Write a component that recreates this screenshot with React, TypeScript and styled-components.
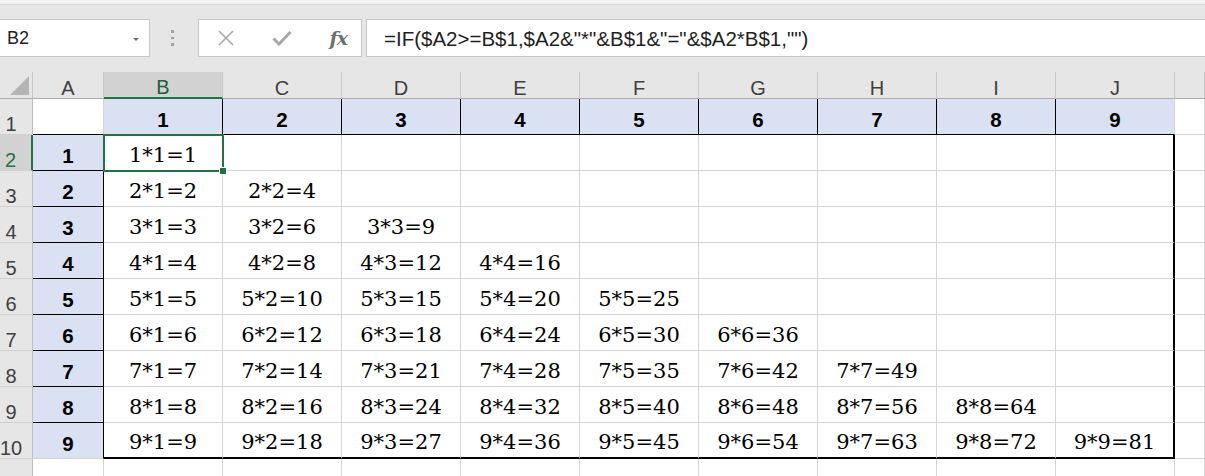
import React from "react";
import styled, { createGlobalStyle } from "styled-components";

type Line = "grid" | "black" | "thick";

const GREEN = "#217346";
const BLUE = "#d9e1f2";

const lineCss = (l: Line): string =>
  l === "thick" ? "2px solid #000" : l === "black" ? "1px solid #000" : "1px solid #d4d4d4";

const GlobalStyle = createGlobalStyle`
  html, body {
    margin: 0;
    padding: 0;
    background: #e6e6e6;
    overflow: hidden;
  }
  body {
    font-family: "Liberation Sans", Arial, sans-serif;
  }
`;

const Screen = styled.div`
  width: 1205px;
  height: 476px;
  overflow: hidden;
  display: flex;
  flex-direction: column;
  & > * {
    flex-shrink: 0;
  }
`;

const TopStrip = styled.div`
  height: 4px;
  background: #f3f3f3;
  border-bottom: 1px solid #d4d4d4;
`;

const FormulaBar = styled.div`
  display: flex;
  align-items: stretch;
  height: 38px;
  padding: 14px 0 15px;
  background: #e6e6e6;
`;

const Box = styled.div`
  box-sizing: border-box;
  background: #fff;
  border: 1px solid #c6c6c6;
  display: flex;
  align-items: center;
`;

const NameBox = styled(Box)`
  width: 151px;
  margin-left: -1px;
  padding: 0 10px 0 7px;
  justify-content: space-between;
  font-size: 18px;
  line-height: 20px;
  color: #222;
`;

const DropArrow = styled.span`
  width: 0;
  height: 0;
  border-left: 3px solid transparent;
  border-right: 3px solid transparent;
  border-top: 3px solid #6d6d6d;
  margin-top: 2px;
`;

const Grip = styled.div`
  width: 45px;
  display: flex;
  flex-direction: column;
  align-items: center;
  justify-content: center;
  gap: 4px;
  padding-right: 3px;
`;

const GripDot = styled.span`
  width: 3px;
  height: 2.5px;
  background: #a3a3a3;
`;

const FnBox = styled(Box)`
  width: 164px;
  padding: 0 14px 0 18px;
  justify-content: space-between;
`;

const FxLabel = styled.span`
  font-family: "DejaVu Serif", "Liberation Serif", serif;
  font-style: italic;
  font-weight: bold;
  font-size: 19px;
  color: #6f6f6f;
  letter-spacing: -1px;
`;

const FormulaBox = styled(Box)`
  flex: 1;
  margin-left: 4px;
  margin-right: -1px;
  padding: 2px 0 0 17px;
  font-size: 20.5px;
  line-height: 22px;
  color: #1f1f1f;
  white-space: nowrap;
`;

const Sheet = styled.div`
  display: grid;
  grid-template-columns: 33px 71px repeat(9, 119px) 1fr;
  grid-template-rows: 27px repeat(11, 36px);
  background: #fff;
`;

const Corner = styled.div`
  box-sizing: border-box;
  background: #e6e6e6;
  border-right: 1px solid #c6c6c6;
  border-bottom: 1px solid #ababab;
  display: flex;
  align-items: flex-end;
  justify-content: flex-end;
  padding: 0 3px 3px 0;
`;

const CornerTriangle = styled.span`
  width: 0;
  height: 0;
  border-left: 19px solid transparent;
  border-bottom: 19px solid #b5b5b5;
`;

const ColHeader = styled.div<{ $selected?: boolean }>`
  box-sizing: border-box;
  background: ${(p) => (p.$selected ? "#d2d2d2" : "#e6e6e6")};
  border-right: 1px solid #c6c6c6;
  border-bottom: ${(p) => (p.$selected ? `2px solid ${GREEN}` : "1px solid #ababab")};
  display: flex;
  align-items: flex-end;
  justify-content: center;
  font-size: 20px;
  line-height: 20px;
  color: ${(p) => (p.$selected ? "#1e5e3a" : "#404040")};
`;

const RowHeader = styled.div<{ $selected?: boolean }>`
  box-sizing: border-box;
  background: ${(p) => (p.$selected ? "#d2d2d2" : "#e6e6e6")};
  border-right: ${(p) => (p.$selected ? `2px solid ${GREEN}` : "1px solid #bfbfbf")};
  border-bottom: 1px solid #d0d0d0;
  display: flex;
  align-items: flex-end;
  justify-content: center;
  padding-right: 10px;
  font-size: 20px;
  line-height: 20px;
  color: ${(p) => (p.$selected ? GREEN : "#404040")};
`;

const Cell = styled.div<{ $fill?: boolean; $right: Line; $bottom: Line; $label?: boolean }>`
  position: relative;
  box-sizing: border-box;
  background: ${(p) => (p.$fill ? BLUE : "#fff")};
  border-right: ${(p) => lineCss(p.$right)};
  border-bottom: ${(p) => lineCss(p.$bottom)};
  display: flex;
  align-items: center;
  justify-content: center;
  white-space: nowrap;
  color: #000;
  ${(p) =>
    p.$label
      ? `font-family: "Liberation Sans", Arial, sans-serif;
         font-weight: bold;
         font-size: 20.5px;
         line-height: 22px;
         padding-top: 7px;`
      : `font-family: "DejaVu Serif", "Liberation Serif", serif;
         font-size: 21px;
         line-height: 24px;
         padding-top: 4px;`}
`;

const Selection = styled.div`
  position: absolute;
  top: -1px;
  left: -1px;
  right: -2px;
  bottom: -2px;
  border: 2px solid ${GREEN};
  z-index: 2;
  pointer-events: none;
`;

const Handle = styled.span`
  position: absolute;
  right: -5px;
  bottom: -5px;
  width: 6px;
  height: 6px;
  background: ${GREEN};
  border: 1px solid #fff;
`;

const letters = ["A", "B", "C", "D", "E", "F", "G", "H", "I", "J", ""];

const FORMULA = '=IF($A2>=B$1,$A2&"*"&B$1&"="&$A2*B$1,"")';

const renderCell = (r: number, c: number) => {
  const key = `${r}-${c}`;
  if (r === 1) {
    if (c === 0) return <Cell key={key} $right="grid" $bottom="black" />;
    if (c <= 9)
      return (
        <Cell key={key} $fill $label $right={c < 9 ? "black" : "grid"} $bottom="black">
          {c}
        </Cell>
      );
    return <Cell key={key} $right="grid" $bottom="grid" />;
  }
  if (r <= 10) {
    const n = r - 1;
    if (c === 0)
      return (
        <Cell key={key} $fill $label $right="black" $bottom={r < 10 ? "black" : "grid"}>
          {n}
        </Cell>
      );
    if (c <= 9)
      return (
        <Cell key={key} $right={c === 9 ? "thick" : "grid"} $bottom={r === 10 ? "thick" : "grid"}>
          {n >= c ? `${n}*${c}=${n * c}` : ""}
          {r === 2 && c === 1 && (
            <Selection>
              <Handle />
            </Selection>
          )}
        </Cell>
      );
    return <Cell key={key} $right="grid" $bottom="grid" />;
  }
  return <Cell key={key} $right="grid" $bottom="grid" />;
};

const App = (): React.ReactElement => {
  const rows = Array.from({ length: 11 }, (_, i) => i + 1);

  return (
    <Screen>
      <GlobalStyle />
      <TopStrip />
      <FormulaBar>
        <NameBox>
          <span>B2</span>
          <DropArrow />
        </NameBox>
        <Grip>
          <GripDot />
          <GripDot />
          <GripDot />
        </Grip>
        <FnBox>
          <svg width="18" height="18" viewBox="0 0 18 18">
            <path d="M2 2 L16 16 M16 2 L2 16" stroke="#a8a8a8" strokeWidth="1.6" fill="none" />
          </svg>
          <svg width="20" height="16" viewBox="0 0 20 16">
            <path d="M1.5 8.5 L7 14 L18.5 2" stroke="#a8a8a8" strokeWidth="3" fill="none" />
          </svg>
          <FxLabel>fx</FxLabel>
        </FnBox>
        <FormulaBox>{FORMULA}</FormulaBox>
      </FormulaBar>
      <Sheet>
        <Corner>
          <CornerTriangle />
        </Corner>
        {letters.map((l) => (
          <ColHeader key={`h-${l || "K"}`} $selected={l === "B"}>
            {l}
          </ColHeader>
        ))}
        {rows.map((r) => (
          <React.Fragment key={r}>
            <RowHeader $selected={r === 2}>{r <= 10 ? r : ""}</RowHeader>
            {letters.map((_, c) => renderCell(r, c))}
          </React.Fragment>
        ))}
      </Sheet>
    </Screen>
  );
};

export default App;
